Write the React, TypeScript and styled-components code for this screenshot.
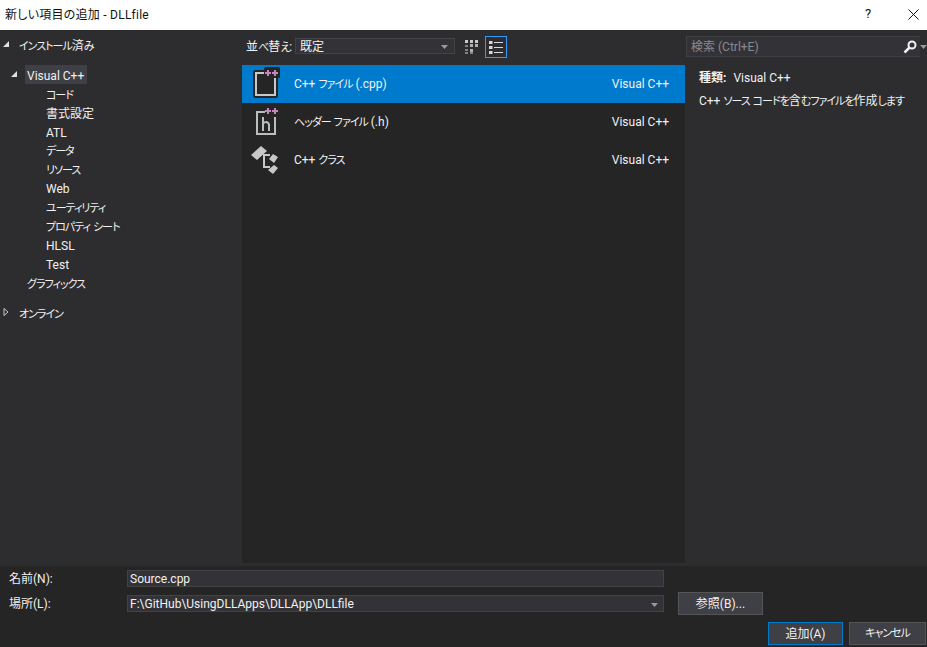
import React from "react";
import styled, { createGlobalStyle } from "styled-components";

const Global = createGlobalStyle`
  html, body { margin: 0; padding: 0; background: #2d2d30; }
  body {
    font-family: Roboto, "Noto Sans CJK JP", sans-serif; font-size: 12px; line-height: 16px; color: #f1f1f1;
    font-feature-settings: "palt" 1;
  }
  * { box-sizing: border-box; }
`;

const Dialog = styled.div`
  width: 927px; height: 647px; display: flex; flex-direction: column; overflow: hidden; background: #2d2d30;
`;
const TitleBar = styled.div`
  height: 30px; flex: none; background: #fff; color: #111; display: flex; align-items: center;
  padding-left: 5px; font-size: 12px;
`;
const TitleText = styled.div`flex: 1; margin-top: -1px; letter-spacing: 0.25px;`;
const HelpButton = styled.div`
  width: 28px; height: 30px; margin-right: 17px; display: flex; align-items: center; justify-content: center;
  color: #111; font-size: 13px; margin-top: -2px;
`;
const CloseButton = styled.div`
  width: 28px; height: 30px; display: flex; align-items: center; justify-content: center; margin-top: -2px;
`;
const Main = styled.div`height: 533px; flex: none; display: flex;`;
const Sidebar = styled.div`width: 242px; flex: none; padding-top: 5px;`;
const TreeRow = styled.div<{ $indent: number; $top?: number }>`
  height: 18.9px; display: flex; align-items: center; margin-top: ${p => p.$top ?? 0}px;
  padding-left: ${p => p.$indent}px;
  color: #f1f1f1; white-space: nowrap;
`;
const TreeLabel = styled.span<{ $selected?: boolean }>`
  padding: 1px 3px 0 2px; height: 19px; line-height: 21px;
  background: ${p => (p.$selected ? "#3f3f46" : "transparent")};
`;
const Arrow = styled.svg`width: 8px; height: 8px; flex: none; margin-right: 7px; margin-left: -15px;`;
const Kana = styled.span`font-size: 11px; letter-spacing: -1px;`;
const Center = styled.div`width: 443px; flex: none; display: flex; flex-direction: column;`;
const Toolbar = styled.div`height: 35px; flex: none; display: flex; align-items: center; padding: 0 0 1px 4px;`;
const SortLabel = styled.span`width: 49px; flex: none; white-space: nowrap; padding-top: 1px;`;
const SortSelect = styled.div`
  width: 160px; height: 16px; margin-bottom: 2px; flex: none; background: #333337; border: 1px solid #434346; display: flex; align-items: center;
  justify-content: space-between; padding: 2px 6px 0 4px; line-height: 14px;
`;
const GridButton = styled.div`
  width: 14px; height: 14px; flex: none; margin-left: 10px; display: flex;
`;
const ListButton = styled.div`
  width: 22px; height: 22px; flex: none; margin-left: 6px; display: flex; align-items: center; justify-content: center;
  border: 1px solid #3399ff;
`;
const List = styled.div`flex: 1; background: #252526;`;
const Item = styled.div<{ $selected?: boolean }>`
  height: 38px; display: flex; align-items: center; padding: 0 16px 0 8px;
  background: ${p => (p.$selected ? "#007acc" : "transparent")};
`;
const ItemIcon = styled.svg`width: 36px; height: 36px; flex: none; margin-right: 8px;`;
const ItemName = styled.span`flex: 1; white-space: nowrap;`;
const Details = styled.div`flex: 1; display: flex; flex-direction: column; min-width: 0;`;
const SearchRow = styled.div`display: flex; align-items: center; margin: 6px 0 0 1px;`;
const SearchBox = styled.div`
  width: 235px; height: 21px; background: #333337; border: 1px solid #3f3f46; border-right: none; display: flex;
  align-items: center; padding: 0 3px 0 4px; color: #8a8a8e; justify-content: space-between;
`;
const SearchHint = styled.span`padding-top: 1px;`;
const SearchCaret = styled.div`flex: 1; display: flex; justify-content: flex-end;`;
const DetailBody = styled.div`padding: 10px 0 0 14px; line-height: 23px; white-space: nowrap;`;
const DetailKey = styled.span`font-weight: 700; margin-right: 7px;`;
const Bottom = styled.div`flex: 1; margin-top: 3px; background: #252526; display: flex; flex-direction: column; padding-top: 4px;`;
const Form = styled.div`
  display: grid; grid-template-columns: 127px 537px 14px 85px; grid-auto-rows: 17px; row-gap: 8px; align-items: center;
`;
const FieldLabel = styled.div`padding-left: 9px;`;
const Field = styled.div`
  height: 17px; background: #333337; border: 1px solid #434346; display: flex; align-items: center; justify-content: space-between;
  padding: 2px 5px 0 2px; line-height: 13px;
`;
const BrowseButton = styled.button`
  grid-column: 4; height: 23px; margin: -3px 0; font: inherit; font-feature-settings: inherit; color: #f1f1f1; background: #3f3f46;
  border: 1px solid #555555; padding: 0;
`;
const Actions = styled.div`
  margin-top: 10px; height: 23px; display: flex; justify-content: flex-end; gap: 6px; padding-right: 1px;
`;
const ActionButton = styled.button<{ $primary?: boolean }>`
  width: ${p => (p.$primary ? 75 : 77)}px; height: 23px; font: inherit; font-feature-settings: inherit; color: #f1f1f1; background: #3f3f46; padding: 0;
  border: 1px solid ${p => (p.$primary ? "#007acc" : "#555555")};
`;

/* Kana runs are set narrower than ideographs, the way the dialog's UI font draws them. */
const T = ({ children }: { children: string }) => (
  <>
    {children.split(/([\u3040-\u30ff]+)/).map((part, i) =>
      i % 2 ? <Kana key={i}>{part}</Kana> : part
    )}
  </>
);

const Caret = () => (
  <svg width="7" height="4" viewBox="0 0 7 4"><path d="M0 0h7L3.5 4z" fill="#999" /></svg>
);
const Down = () => (
  <Arrow viewBox="0 0 8 8"><path d="M7 1v6H1z" fill="#e0e0e0" /></Arrow>
);
const Right = () => (
  <Arrow viewBox="0 0 8 8"><path d="M2 .5L6 4 2 7.5z" fill="none" stroke="#c8c8c8" /></Arrow>
);

const GridIcon = () => (
  <svg width="14" height="14" viewBox="0 0 14 14" fill="#c8c8c8">
    <path d="M0 0h3v3H0zM5 0h3v3H5zM10 0h3v3h-3z" />
    <path d="M5 4h3v3H5zM10 4h3v3h-3zM5 9h3v3H5z" opacity=".85" />
    <path d="M0 5h3v2H0zM0 9h3v2H0zM0 12h3v2H0zM5 12h3v2H5z" opacity=".55" />
  </svg>
);
const ListIcon = () => (
  <svg width="14" height="13" viewBox="0 0 14 13" fill="#d8d8d8">
    <path d="M0 0h3.500v3H0zM0 5h3.500v3H0zM0 10h3.500v3H0z" />
    <path d="M5 1h9v1H5zM5 6h9v1H5zM5 11h9v1H5z" />
  </svg>
);
const CppIcon = () => (
  <ItemIcon viewBox="0 0 36 36">
    <rect x="3" y="4" width="25" height="28" rx="2.500" fill="#252526" />
    <path d="M16 7H6v22h19V12" fill="none" stroke="#c8c8c8" strokeWidth="2" />
    <rect x="14" y="1" width="16" height="11" rx="1.500" fill="#252526" />
    <path d="M15 7h6M18 4v6M22 7h6M25 4v6" stroke="#c586c0" strokeWidth="2" fill="none" />
  </ItemIcon>
);
const HeaderIcon = () => (
  <ItemIcon viewBox="0 0 36 36">
    <path d="M15 8H7v22h18V13" fill="none" stroke="#bdbdbd" strokeWidth="2" />
    <path d="M13 13v14M13 20q1-2 3-2t3 2.500V27" fill="none" stroke="#bdbdbd" strokeWidth="2" />
    <path d="M15 7h6M18 4v6M22 7h6M25 4v6" stroke="#c586c0" strokeWidth="2" fill="none" />
  </ItemIcon>
);
const ClassIcon = () => (
  <ItemIcon viewBox="0 0 36 36">
    <path d="M11 4l6 5-10 9-6-5zM23 12l5 3-4 6-5-4zM24 23l4 3-5 6-5-4z" fill="#c8c8c8" />
    <path d="M13 13h7M14 13v12h6" fill="none" stroke="#c8c8c8" strokeWidth="2" />
  </ItemIcon>
);
const SearchGlyph = () => (
  <svg width="14" height="14" viewBox="0 0 14 14">
    <circle cx="9" cy="5" r="3.500" fill="none" stroke="#f1f1f1" strokeWidth="2" />
    <path d="M6.500 7.500L1.500 12.500" stroke="#f1f1f1" strokeWidth="2.500" />
  </svg>
);

const tree: { label: string; indent: number; top?: number; sel?: boolean; arrow?: "d" | "r" }[] = [
  { label: "インストール済み", indent: 17, arrow: "d" },
  { label: "Visual C++", indent: 25, arrow: "d", sel: true, top: 11 },
  { label: "コード", indent: 44 },
  { label: "書式設定", indent: 44 },
  { label: "ATL", indent: 44 },
  { label: "データ", indent: 44 },
  { label: "リソース", indent: 44 },
  { label: "Web", indent: 44 },
  { label: "ユーティリティ", indent: 44 },
  { label: "プロパティ シート", indent: 44 },
  { label: "HLSL", indent: 44 },
  { label: "Test", indent: 44 },
  { label: "グラフィックス", indent: 25 },
  { label: "オンライン", indent: 17, arrow: "r", top: 11 },
];

export default function App() {
  return (
    <Dialog>
      <Global />
      <TitleBar>
        <TitleText>新しい項目の追加 - DLLfile</TitleText>
        <HelpButton>?</HelpButton>
        <CloseButton>
          <svg width="11" height="11" viewBox="0 0 11 11"><path d="M.5.5l10 10M10.500.5l-10 10" stroke="#111" /></svg>
        </CloseButton>
      </TitleBar>
      <Main>
        <Sidebar>
          {tree.map(t => (
            <TreeRow key={t.label} $indent={t.indent} $top={t.top}>
              {t.arrow === "d" && <Down />}
              {t.arrow === "r" && <Right />}
              <TreeLabel $selected={t.sel}><T>{t.label}</T></TreeLabel>
            </TreeRow>
          ))}
        </Sidebar>
        <Center>
          <Toolbar>
            <SortLabel><T>並べ替え:</T></SortLabel>
            <SortSelect>既定<Caret /></SortSelect>
            <GridButton><GridIcon /></GridButton>
            <ListButton><ListIcon /></ListButton>
          </Toolbar>
          <List>
            <Item $selected><CppIcon /><ItemName><T>C++ ファイル (.cpp)</T></ItemName><span>Visual C++</span></Item>
            <Item><HeaderIcon /><ItemName><T>ヘッダー ファイル (.h)</T></ItemName><span>Visual C++</span></Item>
            <Item><ClassIcon /><ItemName><T>C++ クラス</T></ItemName><span>Visual C++</span></Item>
          </List>
        </Center>
        <Details>
          <SearchRow>
            <SearchBox>
              <SearchHint>検索 (Ctrl+E)</SearchHint>
              <SearchGlyph />
            </SearchBox>
            <SearchCaret><Caret /></SearchCaret>
          </SearchRow>
          <DetailBody>
            <div><DetailKey>種類:</DetailKey>Visual C++</div>
            <div><T>C++ ソース コードを含むファイルを作成します</T></div>
          </DetailBody>
        </Details>
      </Main>
      <Bottom>
        <Form>
          <FieldLabel>名前(N):</FieldLabel>
          <Field>Source.cpp</Field>
          <span />
          <span />
          <FieldLabel>場所(L):</FieldLabel>
          <Field>F:\GitHub\UsingDLLApps\DLLApp\DLLfile<Caret /></Field>
          <span />
          <BrowseButton>参照(B)...</BrowseButton>
        </Form>
        <Actions>
          <ActionButton $primary>追加(A)</ActionButton>
          <ActionButton><T>キャンセル</T></ActionButton>
        </Actions>
      </Bottom>
    </Dialog>
  );
}
